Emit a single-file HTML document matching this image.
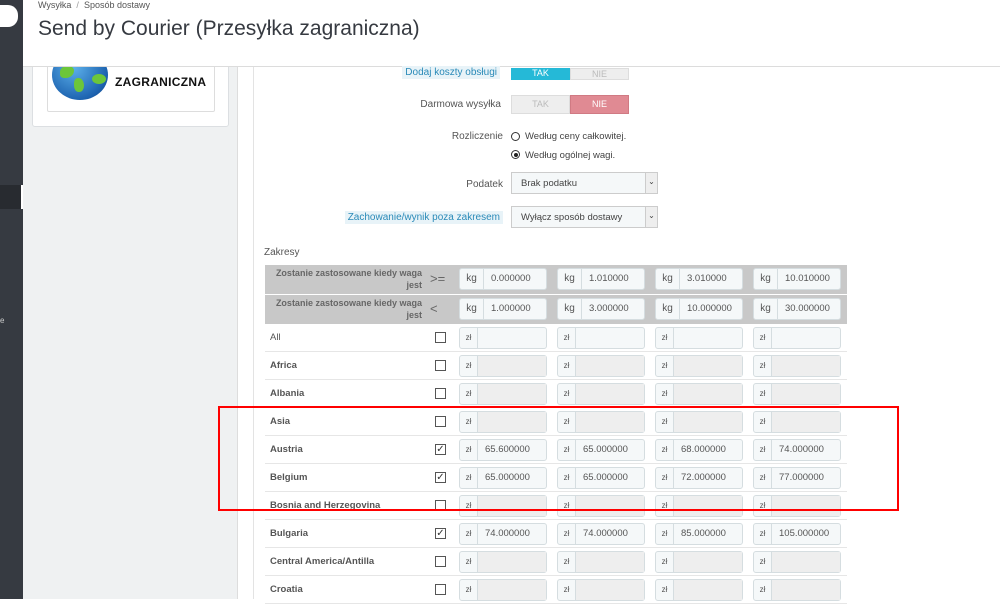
<!DOCTYPE html>
<html><head><meta charset="utf-8"><style>
*{box-sizing:border-box;margin:0;padding:0}
body{width:1000px;height:599px;overflow:hidden;background:#fff;font-family:"Liberation Sans",sans-serif;position:relative;color:#555}
.a{position:absolute}
.lbl{position:absolute;font-size:10px;color:#555;text-align:right}
.hl{background:#e8f3f8;color:#2a8ab8;padding:1px 3px}
.row{position:absolute;left:265px;width:582px;height:28px;border-bottom:1px solid #e6e6e6}
.rn{position:absolute;left:5px;top:8px;font-size:9.5px;font-weight:bold;color:#555}
.cb{position:absolute;left:170px;top:8px;width:11px;height:11px;border:1px solid #555;background:#fff;font-size:10px;line-height:9px;text-align:center;color:#333}
.ig{position:absolute;top:3px;width:88px;height:22px;border:1px solid #d5dde0;border-radius:3px;background:#f5f8f9;font-size:9.5px}
.ig .ad{position:absolute;left:0;top:0;width:18px;height:20px;border-right:1px solid #d5dde0;text-align:center;line-height:20px;font-size:8px;color:#555}
.ig .v{position:absolute;left:18px;top:0;right:0;height:20px;line-height:20px;padding-left:7px;color:#555}
.ig.d .v{background:#eee}
.hr{position:absolute;left:265px;width:582px;height:29px;background:#c8c8c8}
.hr .t{position:absolute;left:0;width:157px;top:2px;text-align:right;font-size:9px;font-weight:bold;color:#666;line-height:12px}
.hr .op{position:absolute;left:165px;top:6px;font-size:13px;color:#666}
.hr .ig{top:3px}
.hr .ig .ad{width:24px;font-size:10px}
.hr .ig .v{left:24px}
</style></head><body>
<div class="a" style="left:0;top:0;width:23px;height:599px;background:#363a41"></div>
<div class="a" style="left:0;top:5px;width:18px;height:22px;background:#fff;border-radius:0 10px 10px 0"></div>
<div class="a" style="left:0;top:185px;width:21px;height:24px;background:#282b30"></div>
<div class="a" style="left:21px;top:185px;width:2px;height:24px;background:#fff"></div>
<div class="a" style="left:0;top:316px;font-size:8px;color:#ccc">e</div>
<div class="a" style="left:23px;top:67px;width:215px;height:532px;background:#eff1f2;border-right:1px solid #ddd"></div>
<div class="a" style="left:32px;top:60px;width:197px;height:67px;background:#fff;border:1px solid #dcdfe2;border-radius:3px"></div>
<div class="a" style="left:47px;top:60px;width:168px;height:52px;background:#fff;border:1px solid #ddd;border-radius:2px"></div>
<div class="a" style="left:52px;top:50px;width:56px;height:50px;border-radius:50%;background:radial-gradient(circle at 40% 35%,#5cb0ea,#1d63b0 70%,#0d3d7a);overflow:hidden">
 <div class="a" style="left:8px;top:16px;width:14px;height:12px;background:#6cc63a;border-radius:50% 40% 60% 30%"></div>
 <div class="a" style="left:22px;top:28px;width:10px;height:14px;background:#6cc63a;border-radius:40% 60% 50% 50%"></div>
 <div class="a" style="left:40px;top:24px;width:14px;height:10px;background:#6cc63a;border-radius:50%"></div>
</div>
<div class="a" style="left:115px;top:75px;font-size:12px;font-weight:bold;color:#111;letter-spacing:0.3px">ZAGRANICZNA</div>
<div class="a" style="left:253px;top:67px;width:1px;height:532px;background:#e3e3e3"></div>
<div class="a" style="left:23px;top:0;width:977px;height:67px;background:#fff;border-bottom:1px solid #dcdcdc"></div>
<div class="a" style="left:38px;top:0px;font-size:9px;color:#555">Wysyłka &nbsp;<span style="color:#999">/</span>&nbsp; Sposób dostawy</div>
<div class="a" style="left:38px;top:17px;font-size:21px;color:#363a41">Send by Courier (Przesyłka zagraniczna)</div>
<div class="lbl" style="left:300px;width:200px;top:67px"><span class="hl">Dodaj koszty obsługi</span></div>
<div class="a" style="left:511px;top:68px;width:59px;height:12px;background:#25b9d7;color:#fff;font-size:9px;text-align:center;line-height:10px">TAK</div>
<div class="a" style="left:570px;top:68px;width:59px;height:12px;background:#eee;border:1px solid #ddd;color:#bbb;font-size:9px;text-align:center;line-height:10px">NIE</div>
<div class="lbl" style="left:300px;width:201px;top:99px">Darmowa wysyłka</div>
<div class="a" style="left:511px;top:95px;width:59px;height:19px;background:#eee;border:1px solid #ddd;color:#bbb;font-size:9px;text-align:center;line-height:17px">TAK</div>
<div class="a" style="left:570px;top:95px;width:59px;height:19px;background:#e08a93;border:1px solid #d07a83;color:#fff;font-size:9px;text-align:center;line-height:17px">NIE</div>
<div class="lbl" style="left:300px;width:203px;top:131px">Rozliczenie</div>
<div class="a" style="left:511px;top:132px;width:9px;height:9px;border:1px solid #333;border-radius:50%"></div>
<div class="a" style="left:525px;top:131px;font-size:9.5px;color:#444">Według ceny całkowitej.</div>
<div class="a" style="left:511px;top:150px;width:9px;height:9px;border:1px solid #333;border-radius:50%"><div class="a" style="left:1.5px;top:1.5px;width:4px;height:4px;background:#222;border-radius:50%"></div></div>
<div class="a" style="left:525px;top:150px;font-size:9.5px;color:#444">Według ogólnej wagi.</div>
<div class="lbl" style="left:300px;width:203px;top:179px">Podatek</div>
<div class="a" style="left:511px;top:172px;width:147px;height:22px;border:1px solid #ccc;background:#f5f8f9;font-size:9.5px;line-height:22px;padding-left:9px;color:#444">Brak podatku<div class="a" style="right:0;top:0;width:12px;height:20px;border-left:1px solid #ccc;background:#eee;font-size:8px;text-align:center;line-height:18px">⌄</div></div>
<div class="lbl" style="left:300px;width:203px;top:212px"><span class="hl">Zachowanie/wynik poza zakresem</span></div>
<div class="a" style="left:511px;top:206px;width:147px;height:22px;border:1px solid #ccc;background:#f5f8f9;font-size:9.5px;line-height:22px;padding-left:9px;color:#444">Wyłącz sposób dostawy<div class="a" style="right:0;top:0;width:12px;height:20px;border-left:1px solid #ccc;background:#eee;font-size:8px;text-align:center;line-height:18px">⌄</div></div>
<div class="a" style="left:264px;top:247px;font-size:10px;color:#555">Zakresy</div>
<div class="hr" style="top:265px"><div class="t">Zostanie zastosowane kiedy waga<br>jest</div><div class="op">&gt;=</div>
<div class="ig" style="left:194px"><div class="ad">kg</div><div class="v">0.000000</div></div>
<div class="ig" style="left:292px"><div class="ad">kg</div><div class="v">1.010000</div></div>
<div class="ig" style="left:390px"><div class="ad">kg</div><div class="v">3.010000</div></div>
<div class="ig" style="left:488px"><div class="ad">kg</div><div class="v">10.010000</div></div></div>
<div class="hr" style="top:295px"><div class="t">Zostanie zastosowane kiedy waga<br>jest</div><div class="op">&lt;</div>
<div class="ig" style="left:194px"><div class="ad">kg</div><div class="v">1.000000</div></div>
<div class="ig" style="left:292px"><div class="ad">kg</div><div class="v">3.000000</div></div>
<div class="ig" style="left:390px"><div class="ad">kg</div><div class="v">10.000000</div></div>
<div class="ig" style="left:488px"><div class="ad">kg</div><div class="v">30.000000</div></div></div>
<div class="row" style="top:324px"><div class="rn" style="font-weight:normal">All</div><div class="cb"></div>
<div class="ig" style="left:194px"><div class="ad">zł</div><div class="v"></div></div><div class="ig" style="left:292px"><div class="ad">zł</div><div class="v"></div></div><div class="ig" style="left:390px"><div class="ad">zł</div><div class="v"></div></div><div class="ig" style="left:488px"><div class="ad">zł</div><div class="v"></div></div></div>
<div class="row" style="top:352px"><div class="rn">Africa</div><div class="cb"></div>
<div class="ig d" style="left:194px"><div class="ad">zł</div><div class="v"></div></div><div class="ig d" style="left:292px"><div class="ad">zł</div><div class="v"></div></div><div class="ig d" style="left:390px"><div class="ad">zł</div><div class="v"></div></div><div class="ig d" style="left:488px"><div class="ad">zł</div><div class="v"></div></div></div>
<div class="row" style="top:380px"><div class="rn">Albania</div><div class="cb"></div>
<div class="ig d" style="left:194px"><div class="ad">zł</div><div class="v"></div></div><div class="ig d" style="left:292px"><div class="ad">zł</div><div class="v"></div></div><div class="ig d" style="left:390px"><div class="ad">zł</div><div class="v"></div></div><div class="ig d" style="left:488px"><div class="ad">zł</div><div class="v"></div></div></div>
<div class="row" style="top:408px"><div class="rn">Asia</div><div class="cb"></div>
<div class="ig d" style="left:194px"><div class="ad">zł</div><div class="v"></div></div><div class="ig d" style="left:292px"><div class="ad">zł</div><div class="v"></div></div><div class="ig d" style="left:390px"><div class="ad">zł</div><div class="v"></div></div><div class="ig d" style="left:488px"><div class="ad">zł</div><div class="v"></div></div></div>
<div class="row" style="top:436px"><div class="rn">Austria</div><div class="cb">✓</div>
<div class="ig" style="left:194px"><div class="ad">zł</div><div class="v">65.600000</div></div><div class="ig" style="left:292px"><div class="ad">zł</div><div class="v">65.000000</div></div><div class="ig" style="left:390px"><div class="ad">zł</div><div class="v">68.000000</div></div><div class="ig" style="left:488px"><div class="ad">zł</div><div class="v">74.000000</div></div></div>
<div class="row" style="top:464px"><div class="rn">Belgium</div><div class="cb">✓</div>
<div class="ig" style="left:194px"><div class="ad">zł</div><div class="v">65.000000</div></div><div class="ig" style="left:292px"><div class="ad">zł</div><div class="v">65.000000</div></div><div class="ig" style="left:390px"><div class="ad">zł</div><div class="v">72.000000</div></div><div class="ig" style="left:488px"><div class="ad">zł</div><div class="v">77.000000</div></div></div>
<div class="row" style="top:492px"><div class="rn">Bosnia and Herzegovina</div><div class="cb"></div>
<div class="ig d" style="left:194px"><div class="ad">zł</div><div class="v"></div></div><div class="ig d" style="left:292px"><div class="ad">zł</div><div class="v"></div></div><div class="ig d" style="left:390px"><div class="ad">zł</div><div class="v"></div></div><div class="ig d" style="left:488px"><div class="ad">zł</div><div class="v"></div></div></div>
<div class="row" style="top:520px"><div class="rn">Bulgaria</div><div class="cb">✓</div>
<div class="ig" style="left:194px"><div class="ad">zł</div><div class="v">74.000000</div></div><div class="ig" style="left:292px"><div class="ad">zł</div><div class="v">74.000000</div></div><div class="ig" style="left:390px"><div class="ad">zł</div><div class="v">85.000000</div></div><div class="ig" style="left:488px"><div class="ad">zł</div><div class="v">105.000000</div></div></div>
<div class="row" style="top:548px"><div class="rn">Central America/Antilla</div><div class="cb"></div>
<div class="ig d" style="left:194px"><div class="ad">zł</div><div class="v"></div></div><div class="ig d" style="left:292px"><div class="ad">zł</div><div class="v"></div></div><div class="ig d" style="left:390px"><div class="ad">zł</div><div class="v"></div></div><div class="ig d" style="left:488px"><div class="ad">zł</div><div class="v"></div></div></div>
<div class="row" style="top:576px"><div class="rn">Croatia</div><div class="cb"></div>
<div class="ig d" style="left:194px"><div class="ad">zł</div><div class="v"></div></div><div class="ig d" style="left:292px"><div class="ad">zł</div><div class="v"></div></div><div class="ig d" style="left:390px"><div class="ad">zł</div><div class="v"></div></div><div class="ig d" style="left:488px"><div class="ad">zł</div><div class="v"></div></div></div>
<div class="a" style="left:218px;top:406px;width:681px;height:105px;border:2px solid #f00"></div>
</body></html>
